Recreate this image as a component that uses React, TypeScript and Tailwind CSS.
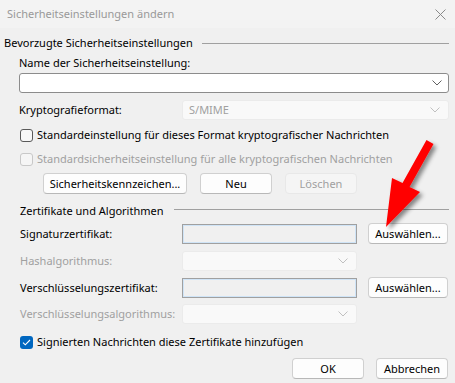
import React from "react";

function Chevron({ color = "#606060" }: { color?: string }) {
  return (
    <svg width="10" height="6" viewBox="0 0 10 6" className="shrink-0">
      <path d="M0.5 0.5 L5 5 L9.5 0.5" fill="none" stroke={color} strokeWidth="1" />
    </svg>
  );
}

function CheckBox({ checked, disabled }: { checked?: boolean; disabled?: boolean }) {
  if (checked) {
    return (
      <span className="w-[13px] h-[13px] rounded-[3px] bg-[#0067c0] flex items-center justify-center shrink-0">
        <svg width="9" height="7" viewBox="0 0 9 7">
          <path d="M1 3.6 L3.3 5.8 L8 1" fill="none" stroke="#fff" strokeWidth="1.1" />
        </svg>
      </span>
    );
  }
  return (
    <span
      className={`w-[13px] h-[13px] rounded-[3px] border shrink-0 ${disabled ? "border-[#c8c8c8] bg-[#f5f5f5]" : "border-[#5a5a5a] bg-[#f7f7f7]"}`}
    />
  );
}

function Btn({ label, width, disabled }: { label: string; width: string; disabled?: boolean }) {
  return (
    <div
      className={`${width} h-[21px] rounded-[4px] border flex items-center justify-center ${disabled ? "bg-[#f5f5f5] border-[#e8e8e8] text-[#a0a0a0]" : "bg-[#fdfdfd] border-[#d0d0d0] border-b-[#b8b8b8] text-black"}`}
    >
      {label}
    </div>
  );
}

function DisabledCombo({ text, width }: { text?: string; width: string }) {
  return (
    <div className={`${width} h-[20px] bg-[#f9f9f9] border border-[#ebebeb] rounded-[3px] flex items-center justify-between pl-[6px] pr-[8px] text-[#a0a0a0]`}>
      <span>{text}</span>
      <Chevron color="#c0c0c0" />
    </div>
  );
}

function CertInput() {
  return (
    <div className="w-[175px] h-[20px] border border-[#a0a0a0] bg-[#f0f0f0]">
      <div className="w-full h-full border border-[#cfe4f7]" />
    </div>
  );
}

export default function App() {
  return (
    <div className="relative w-[455px] h-[383px] overflow-hidden bg-[#f0f0f0] text-[11px] leading-[16px] text-black font-['Noto_Sans','Open_Sans',sans-serif]">
      {/* title bar */}
      <div className="h-[28px] bg-[#f3f3f3] flex items-center justify-between pl-[7px] pr-[9px] text-[#999999]">
        <span>Sicherheitseinstellungen ändern</span>
        <svg width="11" height="11" viewBox="0 0 11 11">
          <path d="M0.5 0.5 L10.5 10.5 M10.5 0.5 L0.5 10.5" stroke="#8a8a8a" strokeWidth="1" />
        </svg>
      </div>

      <div className="pl-[4px] pr-[6px]">
        {/* group 1 */}
        <div className="mt-[7px] flex items-center">
          <span>Bevorzugte Sicherheitseinstellungen</span>
          <div className="flex-1 h-px bg-[#a0a0a0] ml-[9px]" />
        </div>

        <div className="pl-[15px]">
          <div className="mt-[4px]">Name der Sicherheitseinstellung:</div>
          <div className="mt-[2px] h-[20px] bg-white border border-[#8c8c8c] rounded-[3px] flex items-center justify-end pr-[6px]">
            <Chevron />
          </div>

          <div className="mt-[7px] flex items-center">
            <span className="w-[163px]">Kryptografieformat:</span>
            <DisabledCombo text="S/MIME" width="flex-1" />
          </div>

          <div className="mt-[7px] flex items-center gap-[4px] pl-[1px]">
            <CheckBox />
            <span>Standardeinstellung für dieses Format kryptografischer Nachrichten</span>
          </div>
          <div className="mt-[8px] flex items-center gap-[4px] pl-[1px] text-[#a0a0a0]">
            <CheckBox disabled />
            <span>Standardsicherheitseinstellung für alle kryptografischen Nachrichten</span>
          </div>

          <div className="mt-[6px] ml-[24px] flex gap-[13px]">
            <Btn label="Sicherheitskennzeichen..." width="w-[144px]" />
            <Btn label="Neu" width="w-[72px]" />
            <Btn label="Löschen" width="w-[72px]" disabled />
          </div>
        </div>

        {/* group 2 */}
        <div className="pl-[16px]">
          <div className="mt-[9px] flex items-center">
            <span>Zertifikate und Algorithmen</span>
            <div className="flex-1 h-px bg-[#a0a0a0] ml-[10px] -translate-y-[2px]" />
          </div>

          <div className="mt-[4px] flex items-center h-[21px]">
            <span className="w-[162px]">Signaturzertifikat:</span>
            <CertInput />
            <div className="ml-[11px]">
              <Btn label="Auswählen..." width="w-[80px]" />
            </div>
          </div>

          <div className="mt-[7px] flex items-center">
            <span className="w-[162px] text-[#a0a0a0]">Hashalgorithmus:</span>
            <DisabledCombo width="w-[175px]" />
          </div>

          <div className="mt-[6px] flex items-center h-[21px]">
            <span className="w-[162px]">Verschlüsselungszertifikat:</span>
            <CertInput />
            <div className="ml-[11px]">
              <Btn label="Auswählen..." width="w-[80px]" />
            </div>
          </div>

          <div className="mt-[6px] flex items-center">
            <span className="w-[162px] text-[#a0a0a0]">Verschlüsselungsalgorithmus:</span>
            <DisabledCombo width="w-[175px]" />
          </div>

          <div className="mt-[10px] flex items-center gap-[4px]">
            <CheckBox checked />
            <span>Signierten Nachrichten diese Zertifikate hinzufügen</span>
          </div>
        </div>

        <div className="mt-[8px] flex justify-end gap-[12px] pr-[1px]">
          <Btn label="OK" width="w-[72px]" />
          <Btn label="Abbrechen" width="w-[72px]" />
        </div>
      </div>

      {/* red annotation arrow */}
      <svg className="absolute inset-0 pointer-events-none" width="455" height="383" viewBox="0 0 455 383">
        <defs>
          <filter id="sh" x="-50%" y="-50%" width="200%" height="200%">
            <feDropShadow dx="3" dy="3" stdDeviation="2" floodColor="#000" floodOpacity="0.45" />
          </filter>
        </defs>
        <polygon
          points="426.5,140 433.5,144 409.5,187 420,192 386,227 392,178 402.5,183"
          fill="#ff0000"
          filter="url(#sh)"
        />
      </svg>
    </div>
  );
}
